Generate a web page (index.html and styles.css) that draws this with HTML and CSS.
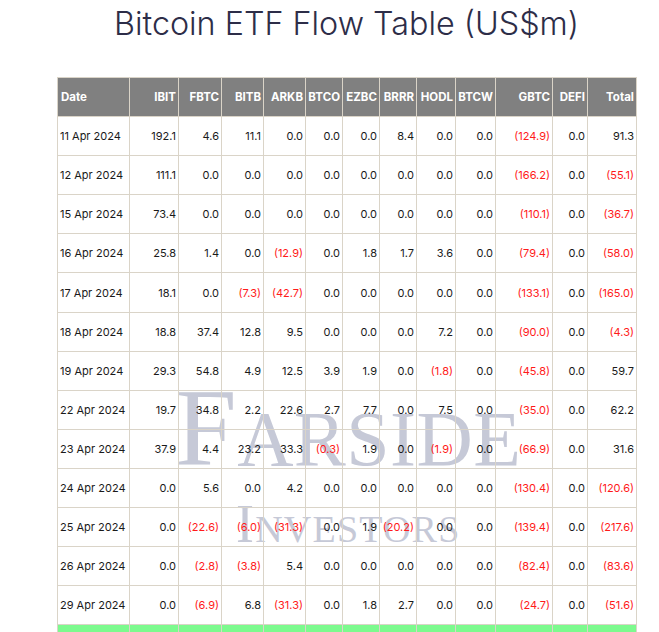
FILE: index.html
```html
<!DOCTYPE html>
<html lang="en">
<head>
<meta charset="utf-8">
<title>Bitcoin ETF Flow Table</title>
<link rel="stylesheet" href="styles.css">
</head>
<body>
<div class="page">
  <h1 class="title">Bitcoin ETF Flow Table (US$m)</h1>
  <div class="table-wrap">
    <div class="watermark" aria-hidden="true">
      <span class="wm-farside">Farside</span>
      <span class="wm-investors">Investors</span>
    </div>
    <table class="flows">
      <colgroup>
        <col class="c-date"><col class="c-ibit"><col class="c-fbtc"><col class="c-bitb"><col class="c-arkb"><col class="c-btco"><col class="c-ezbc"><col class="c-brrr"><col class="c-hodl"><col class="c-btcw"><col class="c-gbtc"><col class="c-defi"><col class="c-total">
      </colgroup>
      <thead>
        <tr><th class="th-date">Date</th><th>IBIT</th><th>FBTC</th><th>BITB</th><th>ARKB</th><th>BTCO</th><th>EZBC</th><th>BRRR</th><th>HODL</th><th>BTCW</th><th>GBTC</th><th>DEFI</th><th>Total</th></tr>
      </thead>
      <tbody>
        <tr><td class="date">11 Apr 2024</td><td>192.1</td><td>4.6</td><td>11.1</td><td>0.0</td><td>0.0</td><td>0.0</td><td>8.4</td><td>0.0</td><td>0.0</td><td class="neg">(124.9)</td><td>0.0</td><td>91.3</td></tr>
        <tr><td class="date">12 Apr 2024</td><td>111.1</td><td>0.0</td><td>0.0</td><td>0.0</td><td>0.0</td><td>0.0</td><td>0.0</td><td>0.0</td><td>0.0</td><td class="neg">(166.2)</td><td>0.0</td><td class="neg">(55.1)</td></tr>
        <tr><td class="date">15 Apr 2024</td><td>73.4</td><td>0.0</td><td>0.0</td><td>0.0</td><td>0.0</td><td>0.0</td><td>0.0</td><td>0.0</td><td>0.0</td><td class="neg">(110.1)</td><td>0.0</td><td class="neg">(36.7)</td></tr>
        <tr><td class="date">16 Apr 2024</td><td>25.8</td><td>1.4</td><td>0.0</td><td class="neg">(12.9)</td><td>0.0</td><td>1.8</td><td>1.7</td><td>3.6</td><td>0.0</td><td class="neg">(79.4)</td><td>0.0</td><td class="neg">(58.0)</td></tr>
        <tr><td class="date">17 Apr 2024</td><td>18.1</td><td>0.0</td><td class="neg">(7.3)</td><td class="neg">(42.7)</td><td>0.0</td><td>0.0</td><td>0.0</td><td>0.0</td><td>0.0</td><td class="neg">(133.1)</td><td>0.0</td><td class="neg">(165.0)</td></tr>
        <tr><td class="date">18 Apr 2024</td><td>18.8</td><td>37.4</td><td>12.8</td><td>9.5</td><td>0.0</td><td>0.0</td><td>0.0</td><td>7.2</td><td>0.0</td><td class="neg">(90.0)</td><td>0.0</td><td class="neg">(4.3)</td></tr>
        <tr><td class="date">19 Apr 2024</td><td>29.3</td><td>54.8</td><td>4.9</td><td>12.5</td><td>3.9</td><td>1.9</td><td>0.0</td><td class="neg">(1.8)</td><td>0.0</td><td class="neg">(45.8)</td><td>0.0</td><td>59.7</td></tr>
        <tr><td class="date">22 Apr 2024</td><td>19.7</td><td>34.8</td><td>2.2</td><td>22.6</td><td>2.7</td><td>7.7</td><td>0.0</td><td>7.5</td><td>0.0</td><td class="neg">(35.0)</td><td>0.0</td><td>62.2</td></tr>
        <tr><td class="date">23 Apr 2024</td><td>37.9</td><td>4.4</td><td>23.2</td><td>33.3</td><td class="neg">(0.3)</td><td>1.9</td><td>0.0</td><td class="neg">(1.9)</td><td>0.0</td><td class="neg">(66.9)</td><td>0.0</td><td>31.6</td></tr>
        <tr><td class="date">24 Apr 2024</td><td>0.0</td><td>5.6</td><td>0.0</td><td>4.2</td><td>0.0</td><td>0.0</td><td>0.0</td><td>0.0</td><td>0.0</td><td class="neg">(130.4)</td><td>0.0</td><td class="neg">(120.6)</td></tr>
        <tr><td class="date">25 Apr 2024</td><td>0.0</td><td class="neg">(22.6)</td><td class="neg">(6.0)</td><td class="neg">(31.3)</td><td>0.0</td><td>1.9</td><td class="neg">(20.2)</td><td>0.0</td><td>0.0</td><td class="neg">(139.4)</td><td>0.0</td><td class="neg">(217.6)</td></tr>
        <tr><td class="date">26 Apr 2024</td><td>0.0</td><td class="neg">(2.8)</td><td class="neg">(3.8)</td><td>5.4</td><td>0.0</td><td>0.0</td><td>0.0</td><td>0.0</td><td>0.0</td><td class="neg">(82.4)</td><td>0.0</td><td class="neg">(83.6)</td></tr>
        <tr><td class="date">29 Apr 2024</td><td>0.0</td><td class="neg">(6.9)</td><td>6.8</td><td class="neg">(31.3)</td><td>0.0</td><td>1.8</td><td>2.7</td><td>0.0</td><td>0.0</td><td class="neg">(24.7)</td><td>0.0</td><td class="neg">(51.6)</td></tr>
        <tr class="total-row"><td></td><td></td><td></td><td></td><td></td><td></td><td></td><td></td><td></td><td></td><td></td><td></td><td></td></tr>
      </tbody>
    </table>
  </div>
</div>
</body>
</html>
```

FILE: styles.css
```css
html, body {
  margin: 0;
  padding: 0;
  background: #ffffff;
}

body {
  font-family: "Inter", "Liberation Sans", sans-serif;
  color: #1a1a1a;
  overflow: hidden;
}

.page {
  margin-left: 57px;
  width: 579px;
  padding-top: 4px;
}

.title {
  margin: 0;
  font-family: "Inter", "Liberation Sans", sans-serif;
  font-weight: 300;
  font-size: 32.3px;
  line-height: 39px;
  color: #2d2d48;
  text-align: center;
}

.table-wrap {
  position: relative;
  margin-top: 34px;
}

.watermark {
  position: absolute;
  inset: 0;
  z-index: 0;
  pointer-events: none;
  font-family: "Liberation Serif", "Times New Roman", serif;
  font-variant: small-caps;
  color: #c6c9d7;
}

.wm-farside {
  position: absolute;
  left: 118px;
  top: 295px;
  font-size: 111px;
  line-height: 1;
  letter-spacing: 0.4px;
  white-space: nowrap;
}

.wm-investors {
  position: absolute;
  left: 179px;
  top: 420px;
  font-size: 54px;
  line-height: 1;
  letter-spacing: 1.2px;
  white-space: nowrap;
}

.flows {
  position: relative;
  z-index: 1;
  border-collapse: collapse;
  table-layout: fixed;
  width: 579px;
  font-size: 11px;
  background: transparent;
}

.c-date { width: 72px; }
.c-ibit { width: 49px; }
.c-fbtc { width: 43px; }
.c-bitb { width: 42px; }
.c-arkb { width: 42px; }
.c-btco { width: 37px; }
.c-ezbc { width: 37px; }
.c-brrr { width: 37px; }
.c-hodl { width: 39px; }
.c-btcw { width: 40px; }
.c-gbtc { width: 57px; }
.c-defi { width: 35px; }
.c-total { width: 49px; }

.flows th,
.flows td {
  border: 1px solid #dad4c8;
  padding: 0 2px;
  text-align: right;
  vertical-align: middle;
  white-space: nowrap;
  overflow: hidden;
}

.flows tr {
  height: 39.1px;
}

.flows th {
  background: #808080;
  color: #ffffff;
  font-weight: 700;
  font-size: 11.5px;
  height: 38px;
}

.flows th.th-date {
  text-align: left;
  padding-left: 3px;
}

.flows td.date {
  text-align: left;
}

.flows td.neg {
  color: #ff1a1a;
}

.total-row td {
  background: #7cfa8e;
}
```
